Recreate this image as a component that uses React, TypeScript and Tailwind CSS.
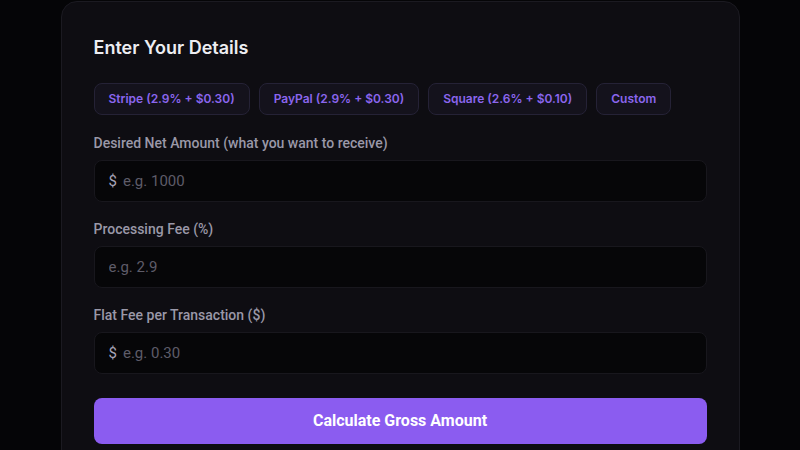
import React from 'react'

// Preset processors shown as chips above the form
const presets = [
  { label: 'Stripe (2.9% + $0.30)' },
  { label: 'PayPal (2.9% + $0.30)' },
  { label: 'Square (2.6% + $0.10)' },
  { label: 'Custom' },
]

interface FieldProps {
  label: string
  placeholder: string
  prefix?: string
}

const Field: React.FC<FieldProps> = ({ label, placeholder, prefix }) => (
  <div className="flex flex-col">
    <label className="mb-[7px] text-[14px] font-medium leading-5 text-[#9a98a8]">{label}</label>
    <div className="flex h-[42px] items-center rounded-lg border border-[#18171d] bg-[#060608] px-[14px]">
      {prefix && <span className="mr-[6px] text-[15px] text-[#a6a4b8]">{prefix}</span>}
      <input
        className="w-full bg-transparent text-[15px] text-white outline-none placeholder:text-[#5e5c68]"
        placeholder={placeholder}
      />
    </div>
  </div>
)

export default function App() {
  return (
    <div
      className="flex h-[450px] w-full justify-center overflow-hidden bg-[#050507]"
      style={{ fontFamily: 'Inter, "Noto Sans", sans-serif' }}
    >
      <div className="mt-px h-[480px] w-[679px] shrink-0 rounded-2xl border border-[#1b1a21] bg-[#0e0d12] px-8 pt-[34px]">
        <h2 className="text-[18px] font-semibold leading-6 text-[#ededf2]">Enter Your Details</h2>

        <div className="mt-[23px] flex gap-[9px]">
          {presets.map((p) => (
            <button
              key={p.label}
              className="h-8 shrink-0 whitespace-nowrap rounded-lg border border-[#252236] bg-[#14121c] px-[14px] text-[12px] font-semibold text-[#8b66ee]"
            >
              {p.label}
            </button>
          ))}
        </div>

        <div className="mt-[18px] flex flex-col gap-[17px]" style={{ fontFamily: 'Roboto, sans-serif' }}>
          <Field label="Desired Net Amount (what you want to receive)" placeholder="e.g. 1000" prefix="$" />
          <Field label="Processing Fee (%)" placeholder="e.g. 2.9" />
          <Field label="Flat Fee per Transaction ($)" placeholder="e.g. 0.30" prefix="$" />
        </div>

        <button
          className="mt-6 h-[46px] w-full rounded-lg bg-[#8b5cf0] text-[16px] font-bold text-white"
          style={{ fontFamily: 'Roboto, sans-serif' }}
        >
          Calculate Gross Amount
        </button>
      </div>
    </div>
  )
}
